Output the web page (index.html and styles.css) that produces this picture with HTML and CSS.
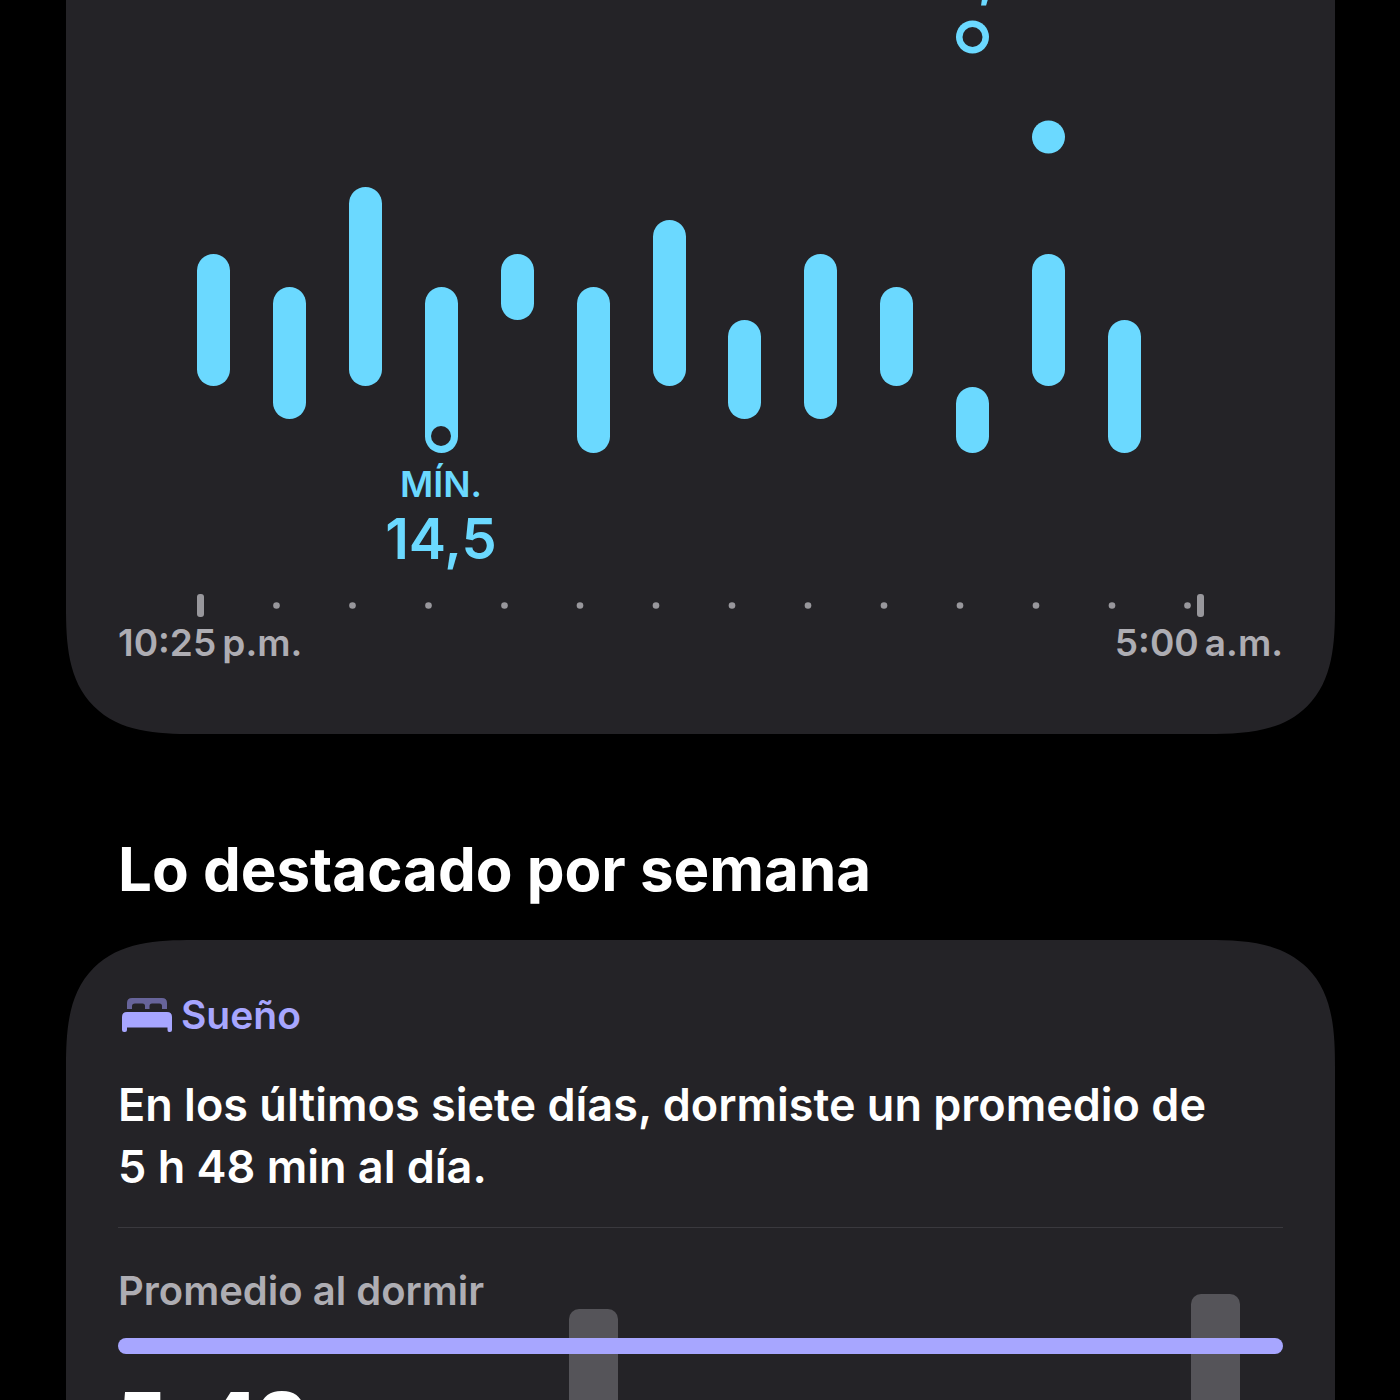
FILE: index.html
```html
<!DOCTYPE html>
<html lang="es">
<head>
  <meta charset="utf-8">
  <meta name="viewport" content="width=device-width, initial-scale=1">
  <title>Resumen de sueño</title>
  <link rel="stylesheet" href="styles.css">
</head>
<body>
  <main class="page">
    <section class="card card-range">
      <svg class="chart" viewBox="0 0 1165 620" role="img" aria-label="Intervalos durante la noche">
        <g class="range">
          <rect x="79" y="254" width="33" height="132" rx="16.5"/>
          <rect x="155" y="287" width="33" height="132" rx="16.5"/>
          <rect x="231" y="187" width="33" height="199" rx="16.5"/>
          <rect x="307" y="287" width="33" height="166" rx="16.5"/>
          <rect x="383" y="254" width="33" height="66" rx="16.5"/>
          <rect x="459" y="287" width="33" height="166" rx="16.5"/>
          <rect x="535" y="220" width="33" height="166" rx="16.5"/>
          <rect x="610" y="320" width="33" height="99" rx="16.5"/>
          <rect x="686" y="254" width="33" height="165" rx="16.5"/>
          <rect x="762" y="287" width="33" height="99" rx="16.5"/>
          <rect x="838" y="387" width="33" height="66" rx="16.5"/>
          <rect x="914" y="254" width="33" height="132" rx="16.5"/>
          <rect x="990" y="320" width="33" height="133" rx="16.5"/>
          <circle cx="854.5" cy="37" r="16.5"/>
          <circle cx="930.5" cy="137" r="16.5"/>
        </g>
        <circle class="hole" cx="854.5" cy="37" r="10"/>
        <circle class="hole" cx="323" cy="436" r="10"/>
        <text class="mark-value" x="851" y="-5">20,5</text>
        <text class="mark-label" x="323" y="497">MÍN.</text>
        <text class="mark-value" x="323" y="559">14,5</text>
        <g class="ticks">
          <rect x="79" y="594" width="7" height="23" rx="3"/>
          <circle cx="158.5" cy="605.5" r="3.3"/>
          <circle cx="234.5" cy="605.5" r="3.3"/>
          <circle cx="310.5" cy="605.5" r="3.3"/>
          <circle cx="386.5" cy="605.5" r="3.3"/>
          <circle cx="462" cy="605.5" r="3.3"/>
          <circle cx="538" cy="605.5" r="3.3"/>
          <circle cx="614" cy="605.5" r="3.3"/>
          <circle cx="690" cy="605.5" r="3.3"/>
          <circle cx="766" cy="605.5" r="3.3"/>
          <circle cx="842" cy="605.5" r="3.3"/>
          <circle cx="918" cy="605.5" r="3.3"/>
          <circle cx="994" cy="605.5" r="3.3"/>
          <circle cx="1069.5" cy="605.5" r="3.3"/>
          <rect x="1079" y="594" width="7" height="23" rx="3"/>
        </g>
      </svg>
      <div class="axis">
        <span>10:25&#8201;p.m.</span>
        <span>5:00&#8201;a.m.</span>
      </div>
    </section>

    <h2 class="heading">Lo destacado por semana</h2>

    <section class="card card-sleep">
      <h3 class="topic">
        <svg class="bed" viewBox="0 0 50 34" aria-hidden="true">
          <path class="bed-back" d="M5 11V5Q5 0 10 0H40Q45 0 45 5V11H40V8Q40 5.500 37.500 5.500H30Q27.500 5.500 27.500 8V11H23V8Q23 5.500 20.500 5.500H13Q10 5.500 10 8V11Z"/>
          <path class="bed-front" d="M0 32V19Q0 14 5 14H45Q50 14 50 19V32Q50 34 48 34H47Q45.500 34 45.500 32V29.500H5V32Q5 34 3 34H2Q0 34 0 32Z"/>
        </svg>
        Sueño
      </h3>
      <p class="summary">En los últimos siete días, dormiste un promedio de 5&nbsp;h&nbsp;48&nbsp;min al día.</p>
      <hr class="rule">
      <div class="average">
        <svg class="week" viewBox="0 0 1165 300" aria-hidden="true">
          <rect class="day" x="451" y="40" width="49" height="280" rx="10"/>
          <rect class="day" x="1073" y="25" width="49" height="295" rx="10"/>
          <rect class="mean" x="0" y="69" width="1165" height="16" rx="8"/>
        </svg>
        <div class="reading">
          <span class="reading-label">Promedio al dormir</span>
          <span class="reading-value"><b>5</b><small>h</small><b>48</b><small>min</small></span>
        </div>
      </div>
    </section>
  </main>
</body>
</html>
```
FILE: styles.css
```css
* {
  box-sizing: border-box;
}

body {
  margin: 0;
  height: 100vh;
  overflow: hidden;
  background: #000;
  color: #fff;
  font-family: Inter, "Liberation Sans", sans-serif;
}

.page {
  padding: 0 65px 0 66px;
}

.card {
  padding: 0 52px;
  background: #242327;
}

.card-range {
  padding-bottom: 68px;
  border-radius: 0 0 96px 96px;
}

.chart,
.week {
  display: block;
  width: 100%;
  height: auto;
}

.chart {
  overflow: visible;
}

.range {
  fill: #6bd9ff;
}

.hole {
  fill: #242327;
}

.ticks {
  fill: #98979c;
}

.mark-label,
.mark-value {
  fill: #6bd9ff;
  text-anchor: middle;
}

.mark-label {
  font-size: 36px;
  font-weight: 600;
}

.mark-value {
  font-size: 56px;
  font-weight: 600;
}

.axis {
  display: flex;
  justify-content: space-between;
  color: #aeadb3;
  font-size: 37px;
  font-weight: 600;
  line-height: 46px;
}

.heading {
  margin: 99px 0 35px;
  padding: 0 52px;
  font-size: 60px;
  font-weight: 700;
  line-height: 72px;
}

.card-sleep {
  padding-top: 51px;
  border-radius: 96px 96px 0 0;
}

@supports (corner-shape: superellipse(1.5)) {
  .card-range {
    border-radius: 0 0 128px 128px;
    corner-shape: superellipse(1.5);
  }

  .card-sleep {
    border-radius: 128px 128px 0 0;
    corner-shape: superellipse(1.5);
  }
}

.topic {
  display: flex;
  align-items: center;
  gap: 9px;
  margin: 0;
  padding-left: 4px;
  color: #a7a6ff;
  font-size: 39px;
  font-weight: 600;
  line-height: 48px;
}

.bed {
  width: 50px;
  height: 34px;
}

.bed-back {
  fill: #67649a;
}

.bed-front {
  fill: #a7a6ff;
}

.summary {
  margin: 35px 0 29px;
  font-size: 45px;
  font-weight: 600;
  line-height: 62px;
}

.rule {
  height: 1px;
  margin: 0;
  border: 0;
  background: #3a393e;
}

.average {
  display: grid;
  padding-top: 41px;
}

.week,
.reading {
  grid-area: 1 / 1;
}

.day {
  fill: #555459;
}

.mean {
  fill: #a7a6ff;
}

.reading {
  display: flex;
  flex-direction: column;
  gap: 68px;
}

.reading-label {
  color: #aeadb3;
  font-size: 40px;
  font-weight: 600;
  line-height: 44px;
}

.reading-value {
  display: flex;
  align-items: baseline;
  gap: 8px;
  font-size: 72px;
  font-weight: 700;
  line-height: 74px;
}

.reading-value small {
  font-size: 40px;
}
```
